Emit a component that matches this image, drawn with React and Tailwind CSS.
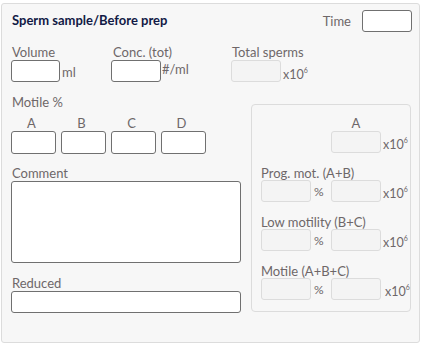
import React from 'react';

const label = 'text-[13px] leading-4 text-[#6e6769]';

const Field = ({ w = 'w-[50px]', h = 'h-[22px]', disabled = false }) => (
    <div
        className={`${w} ${h} shrink-0 rounded-[3px] border ${
            disabled ? 'border-[#dcdcdc] bg-[#f4f4f4]' : 'border-[#707070] bg-white'
        }`}
    />
);

const Mega = ({ className = '' }) => (
    <span className={`text-[12.5px] leading-none text-[#6e6769] ${className}`}>
        x10<sup className="text-[7px] relative -top-[6px]">6</sup>
    </span>
);

// --- one row of the "derived" panel ---
const PercentRow = ({ title, lastShift = '' }) => (
    <div className="mt-[12px]">
        <div className={label}>{title}</div>
        <div className="flex items-center mt-[-1px]">
            <Field disabled />
            <span className="ml-[3px] w-[17px] text-[12px] text-[#6e6769] self-start mt-[3px]">%</span>
            <Field disabled />
            <Mega className={`self-end mb-[1px] ml-[2px] ${lastShift}`} />
        </div>
    </div>
);

export default function App() {
    return (
        <div
            className="w-[424px] h-[346px] bg-white pt-[3px] pl-[1px]"
            style={{ fontFamily: 'Lato, "Open Sans", sans-serif' }}
        >
            <div className="w-[419px] h-[340px] border border-[#dcdcdc] rounded-[3px] bg-[#f7f7f7] flex flex-col">
                {/* header */}
                <div className="flex items-center justify-between pl-[10px] pr-[7px] mt-[6px] h-[22px]">
                    <h1 className="text-[13px] font-bold text-[#121a45]">Sperm sample/Before prep</h1>
                    <div className="flex items-center gap-[11px]">
                        <span className={label}>Time</span>
                        <Field />
                    </div>
                </div>

                {/* volume / conc / total */}
                <div className="flex mt-[12px] pl-[9px]">
                    <div className="w-[100px]">
                        <div className={`${label} pl-[1px]`}>Volume</div>
                        <div className="flex items-center">
                            <Field w="w-[49px]" />
                            <span className="ml-[2px] text-[13px] text-[#6e6769] mt-[3px]">ml</span>
                        </div>
                    </div>
                    <div className="w-[120px]">
                        <div className={`${label} pl-[2px]`}>Conc. (tot)</div>
                        <div className="flex items-center">
                            <Field w="w-[50px]" />
                            <span className="ml-[1px] text-[13px] text-[#6e6769] mt-[-2px]">#/ml</span>
                        </div>
                    </div>
                    <div>
                        <div className={`${label} pl-[1px]`}>Total sperms</div>
                        <div className="flex">
                            <Field disabled />
                            <Mega className="self-end mb-[1px] ml-[2px]" />
                        </div>
                    </div>
                </div>

                {/* body */}
                <div className="flex pl-[9px]">
                    <div className="w-[230px]">
                        <div className={`${label} mt-[11px] pl-[1px]`}>Motile %</div>
                        <div className="grid grid-cols-[45px_45px_45px_45px] gap-x-[5px] mt-[5px]">
                            {['A', 'B', 'C', 'D'].map(l => (
                                <div key={l} className={`${label} text-center pr-[4px]`}>{l}</div>
                            ))}
                            {['A', 'B', 'C', 'D'].map(l => (
                                <Field key={l} w="w-[45px]" h="h-[23px]" />
                            ))}
                        </div>
                        <div className={`${label} mt-[11px] pl-[1px]`}>Comment</div>
                        <Field w="w-[230px]" h="h-[82px]" />
                        <div className={`${label} mt-[12px] pl-[1px]`}>Reduced</div>
                        <Field w="w-[230px]" />
                    </div>

                    <div className="ml-[10px] mt-[21px] w-[160px] h-[208px] border border-[#dcdcdc] rounded-[4px] pl-[9px] pt-[10px]">
                        <div className="flex flex-col items-start pl-[70px]">
                            <div className={`${label} w-[50px] text-center`}>A</div>
                            <div className="flex">
                                <Field disabled />
                                <Mega className="self-end mb-[1px] ml-[2px]" />
                            </div>
                        </div>
                        <PercentRow title="Prog. mot. (A+B)" />
                        <PercentRow title="Low motility (B+C)" />
                        <PercentRow title="Motile (A+B+C)" lastShift="ml-[4px]" />
                    </div>
                </div>
            </div>
        </div>
    );
}
